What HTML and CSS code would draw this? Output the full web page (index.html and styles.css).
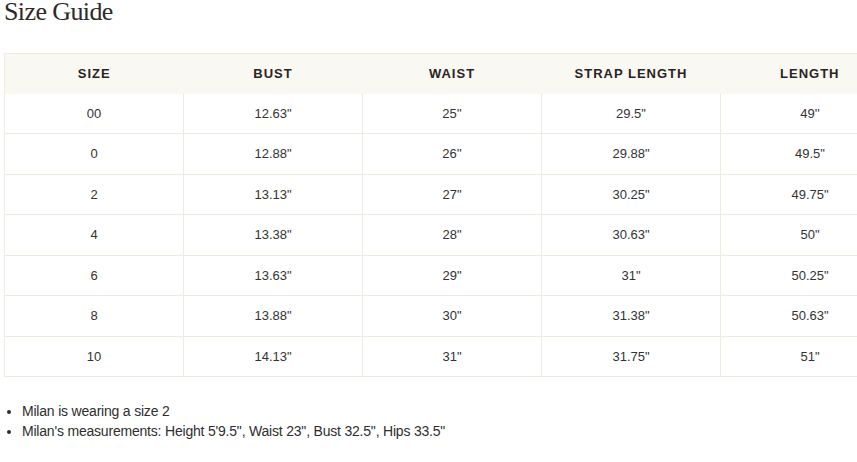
FILE: index.html
```html
<!DOCTYPE html>
<html lang="en">
<head>
<meta charset="utf-8">
<title>Size Guide</title>
<link rel="stylesheet" href="styles.css">
</head>
<body>
<div class="page">
  <h1 class="title">Size Guide</h1>
  <table class="sizes">
    <thead>
      <tr><th>SIZE</th><th>BUST</th><th>WAIST</th><th>STRAP LENGTH</th><th>LENGTH</th></tr>
    </thead>
    <tbody>
      <tr><td>00</td><td>12.63"</td><td>25''</td><td>29.5"</td><td>49''</td></tr>
      <tr><td>0</td><td>12.88"</td><td>26''</td><td>29.88"</td><td>49.5"</td></tr>
      <tr><td>2</td><td>13.13"</td><td>27"</td><td>30.25"</td><td>49.75"</td></tr>
      <tr><td>4</td><td>13.38"</td><td>28"</td><td>30.63"</td><td>50"</td></tr>
      <tr><td>6</td><td>13.63"</td><td>29"</td><td>31"</td><td>50.25"</td></tr>
      <tr><td>8</td><td>13.88"</td><td>30"</td><td>31.38"</td><td>50.63"</td></tr>
      <tr><td>10</td><td>14.13"</td><td>31"</td><td>31.75"</td><td>51"</td></tr>
    </tbody>
  </table>
  <ul class="notes">
    <li>Milan is wearing a size 2</li>
    <li>Milan's measurements: Height 5'9.5", Waist 23", Bust 32.5", Hips 33.5"</li>
  </ul>
</div>
</body>
</html>
```
FILE: styles.css
```css
html, body {
  margin: 0;
  padding: 0;
  background: #ffffff;
}
.page {
  padding: 0 0 0 4px;
  overflow: hidden;
  font-family: "Liberation Sans", Arial, sans-serif;
  color: #333333;
}
.title {
  margin: 0 0 29px 0;
  font-family: "Liberation Serif", "Times New Roman", serif;
  font-weight: 400;
  font-size: 26px;
  line-height: 24px;
  letter-spacing: -0.6px;
  color: #2b2b2b;
}
.sizes {
  width: 896px;
  table-layout: fixed;
  border-collapse: collapse;
  border: 1px solid #efebe0;
}
.sizes th {
  background: #faf8f3;
  font-size: 13px;
  font-weight: 700;
  letter-spacing: 1px;
  color: #2a241f;
  line-height: 19.5px;
  padding: 10px 8px;
  text-align: center;
  border: none;
}
.sizes td {
  font-size: 13px;
  line-height: 19.5px;
  padding: 10px 8px;
  text-align: center;
  color: #333333;
  border: 1px solid #efebe0;
}
.sizes tbody tr:first-child td {
  border-top: none;
}
.notes {
  margin: 24px 0 0 0;
  padding: 0 0 0 18px;
  font-size: 14px;
  line-height: 20px;
  letter-spacing: -0.2px;
  color: #2e2e2e;
}
```
